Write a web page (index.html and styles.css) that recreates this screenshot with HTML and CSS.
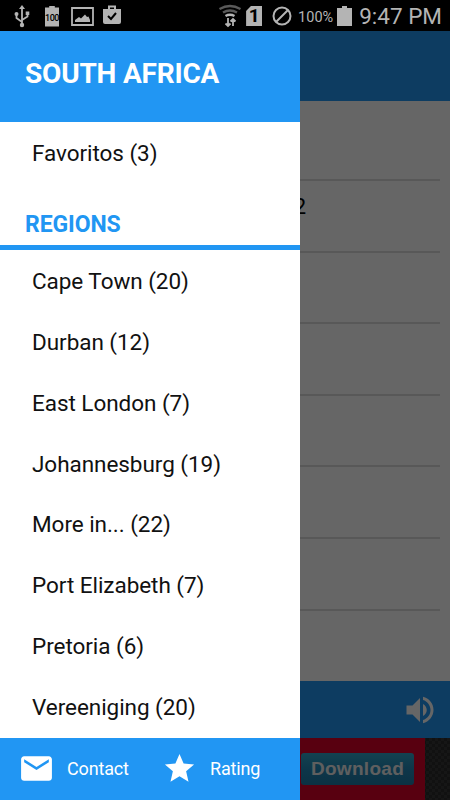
FILE: index.html
```
<!DOCTYPE html>
<html lang="en">
<head>
  <meta charset="UTF-8">
  <meta name="viewport" content="width=device-width, initial-scale=1.0">
  <title>South Africa</title>
  <link rel="stylesheet" href="styles.css">
</head>
<body>
  <!-- Status bar -->
  <header class="status-bar">
    <div class="status-left">
      <svg class="usb" width="16" height="24" viewBox="0 0 16 24" fill="none" stroke="#b4b4b4" stroke-width="1.800">
        <path d="M8 3v18M8 18L2.500 14V10M8 16l5.500-3.500V9"/>
        <path d="M8 1l3 4H5zM11.700 7.500h3.600v3.600h-3.600z" fill="#b4b4b4" stroke="none"/>
        <circle cx="2.500" cy="10" r="2" fill="#b4b4b4" stroke="none"/>
        <circle cx="8" cy="21" r="2.200" fill="#b4b4b4" stroke="none"/>
      </svg>
      <div class="battery-level">100</div>
      <svg class="picture" width="23" height="19" viewBox="0 0 23 19">
        <path d="M1 1h21v17H1z" fill="none" stroke="#b4b4b4" stroke-width="1.800"/>
        <path d="M4 15v-2l4-3 2 1.500 4-4 2 2.500 1.500-.500L19 13v2z" fill="#b4b4b4"/>
      </svg>
      <svg class="store" width="20" height="20" viewBox="0 0 20 20">
        <path d="M7 5V1.500h6V5" fill="none" stroke="#b4b4b4" stroke-width="2"/>
        <path d="M1 4h18v13q0 2-2 2H3q-2 0-2-2z" fill="#b4b4b4"/>
        <path d="M6 11l3 3 5-6" fill="none" stroke="#000" stroke-width="2"/>
      </svg>
    </div>
    <div class="status-right">
      <svg class="wifi" width="22" height="24" viewBox="0 0 22 24" fill="none">
        <path d="M.500 5q10.500-6 21 0M4 8.500q7-4 14 0" stroke="#595959" stroke-width="2.400"/>
        <path d="M6.500 12q4.500-2.600 9 0" stroke="#b4b4b4" stroke-width="2.400"/>
        <path d="M9 14v8M6.500 19.500L9 22l2.500-2.500M14 22v-7M11.500 17.500l2.500-2.500 2.500 2.500" stroke="#b4b4b4" stroke-width="1.800"/>
      </svg>
      <div class="sim">1</div>
      <svg class="blocked" width="20" height="20" viewBox="0 0 20 20" fill="none" stroke="#b4b4b4" stroke-width="2">
        <circle cx="10" cy="10" r="8.500"/>
        <path d="M4 16L16 4"/>
      </svg>
      <span class="percent">100%</span>
      <svg class="battery" width="15" height="20" viewBox="0 0 15 20">
        <path d="M5 0h5v2h5v18H0V2h5z" fill="#b4b4b4"/>
      </svg>
      <span class="clock">9:47 PM</span>
    </div>
  </header>

  <div class="screen">
    <!-- Station list under the menu -->
    <main class="content">
      <div class="app-bar"></div>
      <ul class="stations">
        <li></li>
        <li>2</li>
        <li></li>
        <li></li>
        <li></li>
        <li></li>
        <li></li>
      </ul>
      <div class="player">
        <svg width="36" height="36" viewBox="0 0 24 24" fill="#fff">
          <path d="M3 9v6h4l5 5V4L7 9H3zm13.500 3c0-1.770-1.020-3.290-2.500-4.030v8.050c1.480-.730 2.500-2.250 2.500-4.020zM14 3.230v2.060c2.890.860 5 3.540 5 6.710s-2.110 5.850-5 6.710v2.060c4.010-.910 7-4.490 7-8.770s-2.990-7.860-7-8.770z"/>
        </svg>
      </div>
      <div class="ad">
        <div class="ad-banner"><span class="ad-button">Download</span></div>
      </div>
    </main>

    <div class="shade"></div>

    <!-- Side menu -->
    <nav class="drawer">
      <h1>SOUTH AFRICA</h1>
      <a class="item">Favoritos (3)</a>
      <h2>REGIONS</h2>
      <div class="regions">
        <a class="item">Cape Town (20)</a>
        <a class="item">Durban (12)</a>
        <a class="item">East London (7)</a>
        <a class="item">Johannesburg (19)</a>
        <a class="item">More in... (22)</a>
        <a class="item">Port Elizabeth (7)</a>
        <a class="item">Pretoria (6)</a>
        <a class="item">Vereeniging (20)</a>
      </div>
      <footer class="drawer-footer">
        <a class="contact">
          <svg width="37" height="37" viewBox="0 0 24 24" fill="#fff">
            <path d="M20 4H4c-1.100 0-1.990.900-1.990 2L2 18c0 1.100.900 2 2 2h16c1.100 0 2-.900 2-2V6c0-1.100-.900-2-2-2zm0 4l-8 5-8-5V6l8 5 8-5v2z"/>
          </svg>
          Contact
        </a>
        <a class="rating">
          <svg width="35" height="35" viewBox="0 0 24 24" fill="#fff">
            <path d="M12 17.270L18.180 21l-1.640-7.030L22 9.240l-7.190-.610L12 2 9.190 8.630 2 9.240l5.460 4.730L5.820 21z"/>
          </svg>
          Rating
        </a>
      </footer>
    </nav>
  </div>
</body>
</html>
```

FILE: styles.css
```
* {
  box-sizing: border-box;
}

body {
  margin: 0;
  width: 450px;
  height: 800px;
  overflow: hidden;
  display: flex;
  flex-direction: column;
  font-family: Roboto, sans-serif;
  background: #000;
}

/* Status bar */
.status-bar {
  height: 31px;
  flex: none;
  display: flex;
  justify-content: space-between;
  padding: 1px 8px 0 14px;
  color: #b4b4b4;
}

.status-left,
.status-right {
  display: flex;
  align-items: center;
}

.battery-level {
  width: 14px;
  height: 21px;
  margin: 0 12px 0 15px;
  background: #b4b4b4;
  clip-path: polygon(30% 0, 70% 0, 70% 2px, 100% 2px, 100% 100%, 0 100%, 0 2px, 30% 2px);
  color: #000;
  font-size: 9px;
  font-weight: 500;
  letter-spacing: -0.500px;
  line-height: 24px;
  text-align: center;
}

.store {
  margin: 0 0 3px 8px;
}

.sim {
  width: 16px;
  height: 20px;
  margin: 0 10px 0 5px;
  background: #b4b4b4;
  clip-path: polygon(30% 0, 100% 0, 100% 100%, 0 100%, 0 25%);
  color: #000;
  font-size: 19px;
  font-weight: bold;
  line-height: 20px;
  text-align: center;
}

.percent {
  margin: 2px 4px 0 6px;
  font-size: 14.500px;
}

.clock {
  margin-left: 7px;
  font-size: 22.500px;
  line-height: 30px;
}

.screen {
  position: relative;
  flex: 1;
}

/* Main content */
.content {
  height: 100%;
  display: flex;
  flex-direction: column;
  background: #fff;
}

.app-bar {
  height: 70px;
  background: #2196f3;
}

.stations {
  flex: 1;
  margin: 0;
  padding: 8.500px 10px 0;
  list-style: none;
}

.stations li {
  height: 71.600px;
  padding: 13px 134px 0 0;
  border-bottom: 2px solid #ddd;
  text-align: right;
  font-size: 22px;
  line-height: 26px;
}

.player {
  height: 57px;
  display: flex;
  align-items: center;
  justify-content: flex-end;
  padding-right: 12px;
  background: #2196f3;
}

.ad {
  height: 62px;
  background: repeating-conic-gradient(#383838 0 25%, #2c2c2c 0 50%) 0 0 / 6px 6px;
}

.ad-banner {
  width: 425px;
  height: 100%;
  display: flex;
  align-items: center;
  justify-content: flex-end;
  padding-right: 11px;
  background: #dc0029;
}

.ad-button {
  width: 113px;
  height: 32px;
  border-radius: 3px;
  background: linear-gradient(#32a5c8, #2288b8 50%, #1f7ba8);
  color: #eee;
  font: bold 19px/32px "Liberation Sans", Arial, sans-serif;
  letter-spacing: 0.300px;
  text-align: center;
}

.shade {
  position: absolute;
  inset: 0;
  background: rgba(0, 0, 0, 0.6);
}

/* Drawer */
.drawer {
  position: absolute;
  top: 0;
  bottom: 0;
  left: 0;
  width: 300px;
  display: flex;
  flex-direction: column;
  background: #fff;
}

.drawer h1 {
  height: 91px;
  margin: 0;
  padding-left: 25px;
  background: #2196f3;
  color: #fff;
  font-size: 28px;
  font-weight: 700;
  letter-spacing: -0.200px;
  line-height: 86px;
}

.item {
  height: 60.860px;
  display: flex;
  align-items: center;
  padding: 1.500px 0 0 32px;
  color: #111;
  font-size: 22.500px;
  letter-spacing: -0.050px;
}

.drawer h2 {
  height: 67px;
  margin: 0;
  padding: 28px 0 0 25px;
  border-bottom: 5px solid #2196f3;
  color: #2196f3;
  font-size: 23px;
  font-weight: 700;
  letter-spacing: -0.100px;
  line-height: 28px;
}

.regions {
  flex: 1;
}

.drawer-footer {
  height: 62px;
  display: flex;
  padding-bottom: 1px;
  background: #2196f3;
  color: #fff;
  font-size: 18px;
  letter-spacing: -0.150px;
}

.drawer-footer a {
  display: flex;
  align-items: center;
}

.contact {
  width: 144px;
  padding-left: 18px;
  gap: 12px;
}

.rating {
  padding-left: 18px;
  gap: 13px;
}
```
